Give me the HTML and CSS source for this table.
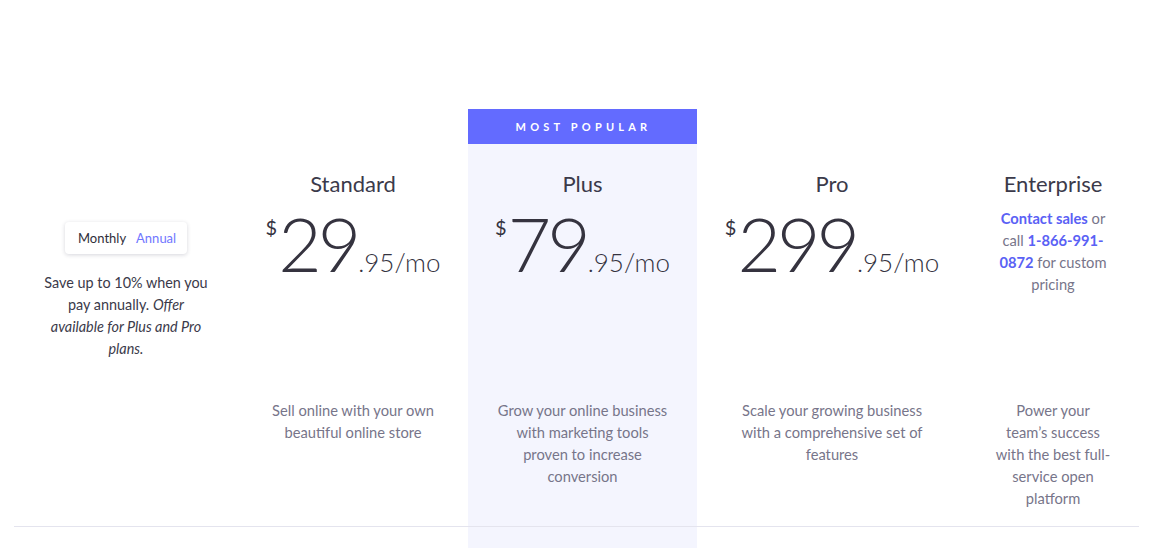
FILE: index.html
```html
<!DOCTYPE html>
<html lang="en">
<head>
<meta charset="utf-8">
<title>Pricing</title>
<link rel="stylesheet" href="styles.css">
</head>
<body>
<div class="pricing">
  <div class="head-cell"></div>
  <div class="head-cell"></div>
  <div class="head-cell badge">Most popular</div>
  <div class="head-cell"></div>
  <div class="head-cell"></div>

  <div class="cell billing">
    <div class="toggle">
      <span class="toggle-opt">Monthly</span>
      <span class="toggle-opt toggle-active">Annual</span>
    </div>
    <p class="billing-note">Save up to 10% when you pay annually. <em>Offer available for Plus and Pro plans.</em></p>
  </div>

  <div class="cell plan plan-standard">
    <h2 class="plan-name">Standard</h2>
    <div class="plan-price">
      <div class="price"><span class="currency">$</span><span class="amount">29</span><span class="cents">.95/mo</span></div>
    </div>
    <p class="plan-desc">Sell online with your own beautiful online store</p>
  </div>

  <div class="cell plan plan-plus featured">
    <h2 class="plan-name">Plus</h2>
    <div class="plan-price">
      <div class="price"><span class="currency">$</span><span class="amount">79</span><span class="cents">.95/mo</span></div>
    </div>
    <p class="plan-desc">Grow your online business with marketing tools proven to increase conversion</p>
  </div>

  <div class="cell plan plan-pro">
    <h2 class="plan-name">Pro</h2>
    <div class="plan-price">
      <div class="price"><span class="currency">$</span><span class="amount">299</span><span class="cents">.95/mo</span></div>
    </div>
    <p class="plan-desc">Scale your growing business with a comprehensive set of features</p>
  </div>

  <div class="cell plan plan-enterprise">
    <h2 class="plan-name">Enterprise</h2>
    <div class="plan-price">
      <p class="contact"><a class="link" href="#">Contact sales</a> or call <a class="link" href="#">1-866-991-0872</a> for custom pricing</p>
    </div>
    <p class="plan-desc">Power your team’s success with the best full-service open platform</p>
  </div>

  <div class="tail"></div>
  <div class="tail"></div>
  <div class="tail featured"></div>
  <div class="tail"></div>
  <div class="tail"></div>
</div>
</body>
</html>
```

FILE: styles.css
```css
* { box-sizing: border-box; }

html, body {
  margin: 0;
  padding: 0;
  background: #ffffff;
  overflow: hidden;
}

body {
  font-family: "Lato", "Open Sans", sans-serif;
  color: #3b3a4a;
  -webkit-font-smoothing: antialiased;
}

.pricing {
  display: grid;
  grid-template-columns: 224px 230px 229px 270px 172px;
  margin: 109px 0 0 14px;
}

.head-cell {
  height: 35px;
}

.badge {
  background: #636bff;
  color: #ffffff;
  font-size: 11px;
  font-weight: 700;
  letter-spacing: 4.2px;
  text-transform: uppercase;
  display: flex;
  align-items: center;
  justify-content: center;
  padding-left: 2px;
}

.cell {
  border-bottom: 1px solid #e4e4ee;
  text-align: center;
}

.featured {
  background: #f4f5fe;
}

/* billing column */
.billing {
  padding: 78px 30px 0;
  display: flex;
  flex-direction: column;
  align-items: center;
}

.toggle {
  display: flex;
  align-items: center;
  gap: 10px;
  height: 32px;
  width: 122px;
  padding: 0 13px;
  background: #ffffff;
  border-radius: 4px;
  box-shadow: 0 1px 4px rgba(30, 30, 60, 0.18);
  font-size: 13px;
}

.toggle-opt { color: #2f2e3a; }
.toggle-active { color: #6f76ff; }

.billing-note {
  margin: 18px 0 0;
  font-size: 14.4px;
  line-height: 22px;
  color: #3b3a4a;
}

.billing-note em { font-style: italic; }

/* plans */
.plan {
  padding: 26px 28px 17px;
  display: flex;
  flex-direction: column;
  align-items: center;
}

.plan-name {
  margin: 0;
  font-size: 22px;
  line-height: 28px;
  font-weight: 400;
  color: #3b3a4a;
}

.plan-price {
  height: 201px;
  width: 100%;
}

.price {
  display: flex;
  justify-content: center;
  align-items: baseline;
  line-height: 90px;
  color: #35333f;
}

.currency {
  align-self: flex-start;
  font-size: 20px;
  line-height: 20px;
  margin-top: 19px;
  margin-right: 1px;
}

.amount {
  font-size: 75px;
  font-weight: 300;
  letter-spacing: -4px;
  margin-right: 1px;
}

.cents {
  font-size: 26px;
  font-weight: 300;
}

.contact {
  margin: 9px 0 0;
  font-size: 14.7px;
  line-height: 22px;
  color: #77758a;
}

.link {
  color: #5a61f5;
  font-weight: 700;
  text-decoration: none;
}

.plan-desc {
  margin: 0;
  font-size: 14.7px;
  line-height: 22px;
  color: #77758a;
}

.plan-standard { padding-left: 32px; padding-right: 32px; }
.plan-plus { padding-left: 28px; padding-right: 28px; }
.plan-pro { padding-left: 40px; padding-right: 40px; }
.plan-enterprise { padding-left: 28px; padding-right: 28px; }

.tail {
  height: 21px;
}
```
